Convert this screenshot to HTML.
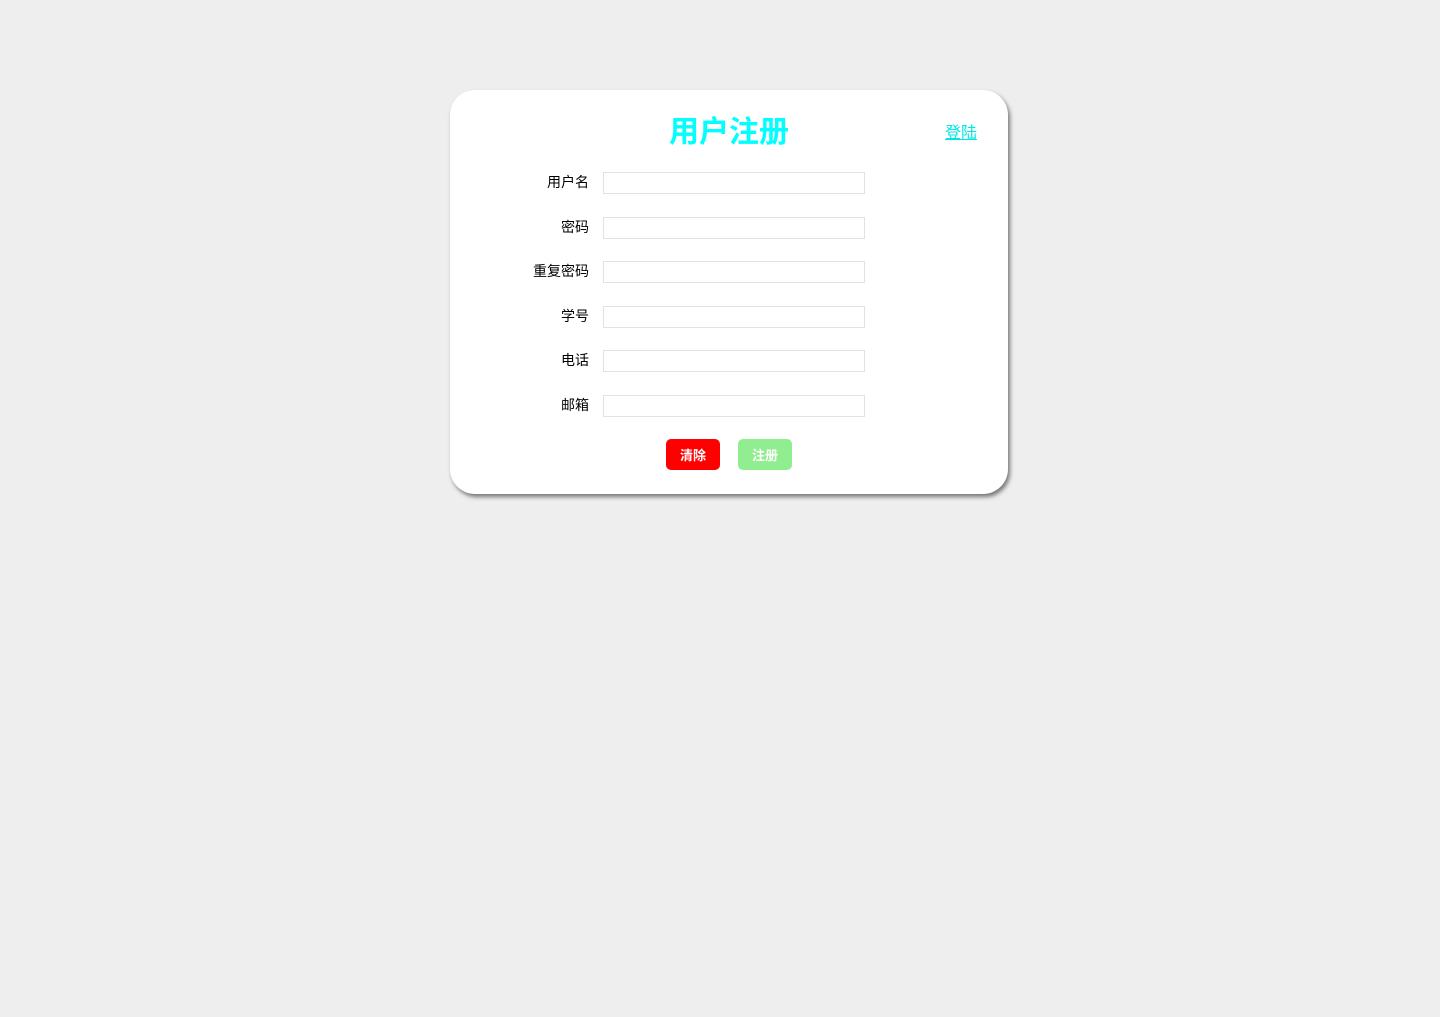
<!DOCTYPE html>
<html><head><meta charset="utf-8"><style>
html,body{margin:0;padding:0;background:#eeeeee;width:1440px;height:1017px;overflow:hidden;font-family:"Liberation Sans","Noto Sans CJK SC",sans-serif;}
.card{position:absolute;left:450px;top:90px;width:558px;height:404px;background:#fff;border-radius:25px;box-shadow:2px 3px 4px #777;}
.title{position:absolute;left:0;width:1458px;top:113px;text-align:center;font-size:30px;font-weight:bold;color:#00ffff;line-height:40px;}
.login{position:absolute;left:945px;top:124px;font-size:16px;color:#00e5e5;text-decoration:underline;line-height:20px;}
.lbl{position:absolute;width:120px;left:469px;text-align:right;font-size:14px;color:#000;line-height:18px;}
.inp{position:absolute;left:603px;width:260px;height:20px;border:1px solid #e2e2e2;background:#fff;}
.btn{position:absolute;top:439px;width:54px;height:31px;border-radius:5px;color:#fff;font-weight:bold;font-size:13px;text-align:center;line-height:33px;}
</style></head><body>
<div class="card"></div>
<div class="title">用户注册</div>
<div class="login">登陆</div>
<div class="lbl" style="top:173px">用户名</div><div class="inp" style="top:172px"></div>
<div class="lbl" style="top:218px">密码</div><div class="inp" style="top:217px"></div>
<div class="lbl" style="top:262px">重复密码</div><div class="inp" style="top:261px"></div>
<div class="lbl" style="top:307px">学号</div><div class="inp" style="top:306px"></div>
<div class="lbl" style="top:351px">电话</div><div class="inp" style="top:350px"></div>
<div class="lbl" style="top:396px">邮箱</div><div class="inp" style="top:395px"></div>
<div class="btn" style="left:666px;background:#ff0000">清除</div>
<div class="btn" style="left:738px;background:#90ee90">注册</div>
</body></html>
